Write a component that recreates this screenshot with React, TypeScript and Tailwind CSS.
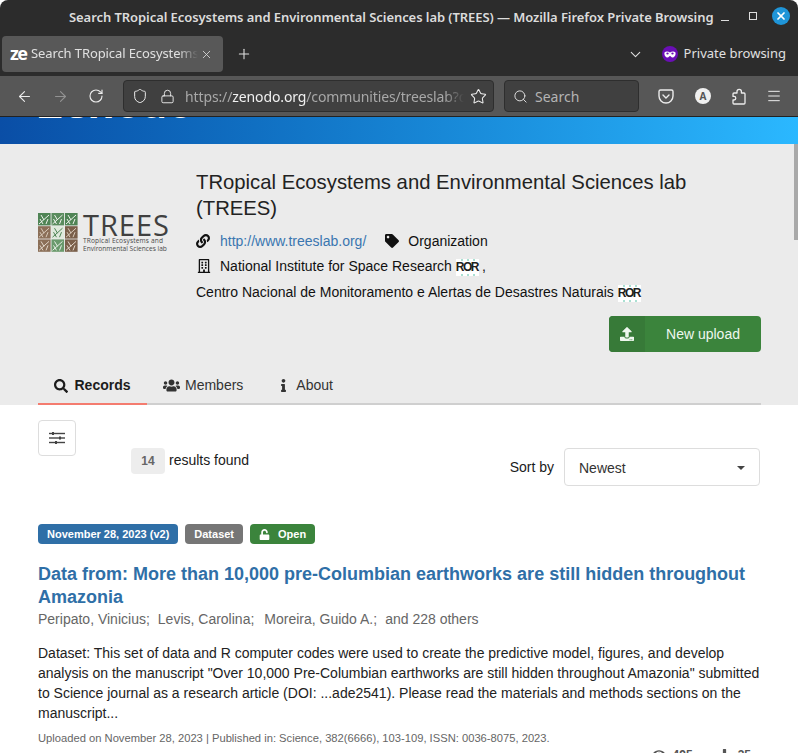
import { ArrowLeft, ArrowRight, ChevronDown, Lock, Menu, Plus, RotateCw, Search, Shield, Star, X } from "lucide-react";
import { FaDownload, FaEye, FaInfo, FaLink, FaRegBuilding, FaSearch, FaTag, FaUnlock, FaUpload, FaUsers } from "react-icons/fa";

const sans = "font-['Liberation_Sans',Arial,sans-serif]";

// 3x3 tiles of the TREES mark: background and vein colour
const tiles = [
  ["#4f8455", "#eef2ec"],
  ["#5a8c5e", "#eef2ec"],
  ["#4f8455", "#eef2ec"],
  ["#8b6f58", "#d9cbbb"],
  ["#dfe9dc", "#4f8455"],
  ["#7a5f4a", "#d9cbbb"],
  ["#8b6f58", "#e2d7ca"],
  ["#6a9a6c", "#e8efe6"],
  ["#7a5f4a", "#e2d7ca"],
];

const TreesLogo = () => (
  <div className="flex items-start gap-[5px] w-[132px] shrink-0">
    <svg width="40" height="39" viewBox="0 0 40 39" className="shrink-0">
      {tiles.map(([bg, vein], i) => {
        const x = (i % 3) * 13.5;
        const y = Math.floor(i / 3) * 13.2;
        return (
          <g key={i} transform={`translate(${x} ${y})`}>
            <rect width="12.6" height="12.4" fill={bg} />
            <path d="M1 11L11 2M3 2L6 7M8 11L10 6M2 6L5 11" stroke={vein} strokeWidth="1" fill="none" />
          </g>
        );
      })}
    </svg>
    <div className="flex flex-col text-[#4a4a4a] font-['Open_Sans',sans-serif]">
      <span className="text-[29px] leading-[23px] tracking-[1px] font-normal text-[#404040]">TREES</span>
      <span className="text-[6.6px] leading-[8px] mt-[1px] whitespace-nowrap tracking-[0.15px]">TRopical Ecosystems and</span>
      <span className="text-[6.6px] leading-[8px] whitespace-nowrap">Environmental Sciences lab</span>
    </div>
  </div>
);

const RorBadge = () => (
  <span className="inline-flex flex-col items-center justify-between w-[23px] h-[17px] bg-white ml-[4px] mr-[3px] relative top-[1px] shrink-0">
    <svg width="17" height="2" viewBox="0 0 17 2" className="block">
      <path d="M2 1h2M8 1h2M14 1h2" stroke="#8fd6c4" strokeWidth="1.5" />
    </svg>
    <span className="text-[12px] leading-[10px] font-bold text-[#202020] tracking-[-1.5px] pr-[1px]">ROR</span>
    <svg width="17" height="2" viewBox="0 0 17 2" className="block">
      <path d="M2 1h2M8 1h2M14 1h2" stroke="#8fd6c4" strokeWidth="1.5" />
    </svg>
  </span>
);

const App = () => {
  return (
    <div className={`relative w-[798px] h-[753px] overflow-hidden bg-white flex flex-col ${sans}`}>
      {/* Window title */}
      <div className="h-[36px] shrink-0 bg-[#2c2c2c] rounded-t-[8px] flex items-center font-['Noto_Sans',sans-serif] text-[#dcdcdc]">
        <div className="pl-[69px] shrink-0 text-[13px] font-semibold whitespace-nowrap tracking-[-0.07px]">
          Search TRopical Ecosystems and Environmental Sciences lab (TREES) — Mozilla Firefox Private Browsing
        </div>
      </div>
      <div className="absolute top-[7px] right-[8px] flex items-center">
        <div className="w-[8px] h-[1px] bg-[#ddd] mt-[9px]" />
        <div className="ml-[20px] w-[8px] h-[8px] border border-[#ddd]" />
        <div className="ml-[15px] w-[18px] h-[18px] rounded-full bg-[#1f95d8] flex items-center justify-center">
          <X size={12} strokeWidth={3.5} color="#fff" />
        </div>
      </div>

      {/* Tab strip */}
      <div className="h-[40px] shrink-0 bg-[#2c2c2c] flex items-start pl-[2px] font-['Noto_Sans',sans-serif] text-[#e0e0e0]">
        <div className="h-[36px] w-[221px] rounded-[4px] bg-[#585858] flex items-center pl-[8px] pr-[10px]">
          <span className="text-[18px] leading-[18px] font-bold text-white tracking-[-1.5px] w-[21px] shrink-0 -mt-[3px]">ze</span>
          <span className="text-[13px] tracking-[-0.1px] w-[167px] overflow-hidden whitespace-nowrap text-[#e0e0e0] [mask-image:linear-gradient(to_right,black_88%,transparent)]">Search TRopical Ecosystems and</span>
          <X size={13} strokeWidth={1.5} className="ml-[2px] shrink-0" />
        </div>
        <div className="ml-[13px] h-[36px] flex items-center">
          <Plus size={16} strokeWidth={1.6} />
        </div>
        <div className="ml-auto h-[36px] flex items-center pr-[12px]">
          <ChevronDown size={17} strokeWidth={1.5} className="mr-[18px]" />
          <span className="w-[16px] h-[16px] rounded-full bg-[#6a0fb5] flex items-center justify-center mr-[6px]">
            <svg width="12" height="7" viewBox="0 0 12 7">
              <path fillRule="evenodd" d="M0.5 1.5C2 0 4.5 0.5 6 1.5C7.5 0.5 10 0 11.5 1.5C12 4 10.5 6.5 8.5 6.5C7 6.5 7 5 6 5C5 5 5 6.5 3.5 6.5C1.5 6.5 0 4 0.5 1.5ZM2.3 2.6a1.2 1 0 1 0 2.4 0a1.2 1 0 1 0-2.4 0ZM7.3 2.6a1.2 1 0 1 0 2.4 0a1.2 1 0 1 0-2.4 0Z" fill="#fff" />
            </svg>
          </span>
          <span className="text-[13px]">Private browsing</span>
        </div>
      </div>

      {/* Toolbar */}
      <div className="h-[41px] shrink-0 bg-[#575757] border-b border-[#222] flex items-center pl-[16px] text-[#ececec] font-['Noto_Sans',sans-serif]">
        <ArrowLeft size={17} strokeWidth={1.5} />
        <ArrowRight size={17} strokeWidth={1.5} className="ml-[19px] text-[#939393]" />
        <RotateCw size={16} strokeWidth={1.7} className="ml-[19px]" />
        <div className="ml-[19px] w-[371px] h-[32px] rounded-[4px] bg-[#404040] border border-[#2e2e2e] flex items-center pl-[8px] pr-[6px]">
          <Shield size={16} strokeWidth={1.5} className="shrink-0" />
          <Lock size={15} strokeWidth={1.5} className="ml-[12px] shrink-0" />
          <div className="ml-[10px] w-[279px] overflow-hidden whitespace-nowrap text-[14px] tracking-[-0.12px] text-[#a8a8a8] [mask-image:linear-gradient(to_right,black_93%,transparent)]">
            https://<span className="text-[#f0f0f0]">zenodo.org</span>/communities/treeslab?q
          </div>
          <Star size={17} strokeWidth={1.5} className="ml-auto shrink-0" />
        </div>
        <div className="ml-[10px] w-[135px] h-[32px] rounded-[4px] bg-[#404040] border border-[#2e2e2e] flex items-center pl-[8px] text-[14px] text-[#b4b4b4]">
          <Search size={15} strokeWidth={1.6} className="text-[#ddd] mr-[7px]" />
          Search
        </div>
        <svg width="16" height="15" viewBox="0 0 16 15" fill="none" stroke="#ececec" strokeWidth="1.4" className="ml-[19px]">
          <path d="M2.5 1h11a1.5 1.5 0 0 1 1.5 1.5V7a7 7 0 0 1-14 0V2.5A1.5 1.5 0 0 1 2.5 1Z" />
          <path d="M5 6l3 3 3-3" strokeLinecap="round" />
        </svg>
        <div className="ml-[21px] w-[16px] h-[16px] rounded-full bg-[#f0f0f0] text-[#555] text-[10px] font-bold flex items-center justify-center">A</div>
        <svg width="15" height="17" viewBox="0 0 15 17" fill="none" stroke="#ececec" strokeWidth="1.3" className="ml-[21px]">
          <path d="M2 16a1 1 0 0 1-1-1v-3h1a1.8 1.8 0 0 0 0-3.6H1V6a1 1 0 0 1 1-1h3V3.5a2.2 2.2 0 0 1 4.4 0V5H12a1 1 0 0 1 1 1v9a1 1 0 0 1-1 1Z" strokeLinejoin="round" />
        </svg>
        <Menu size={16} strokeWidth={1.5} className="ml-[19px]" />
      </div>

      {/* Site header band */}
      <div className="h-[27px] shrink-0 overflow-hidden bg-gradient-to-r from-[#0a4ea6] to-[#2bb8ff] pl-[38px]">
        <div className="text-[42px] leading-[42px] -mt-[36px] text-white font-bold font-['Open_Sans',sans-serif]">Zenodo</div>
      </div>

      {/* Community header */}
      <div className="h-[261px] shrink-0 bg-[#ebebeb] pl-[38px] pr-[37px] flex flex-col">
        <div className="flex h-[224px] text-[14px] text-[#111]">
          <div className="w-[158px] shrink-0 pt-[69px]">
            <TreesLogo />
          </div>
          <div className="flex-1 pt-[25px]">
            <h1 className="text-[20.3px] leading-[26px] text-[#222] font-normal">
              TRopical Ecosystems and Environmental Sciences lab (TREES)
            </h1>
            <div className="flex items-center mt-[10px] h-[20px]">
              <FaLink size={14} className="mr-[10px]" />
              <span className="text-[#3a76b0]">http://www.treeslab.org/</span>
              <FaTag size={14} className="ml-[19px] mr-[9px]" />
              <span>Organization</span>
            </div>
            <div className="flex items-center mt-[5px] h-[20px]">
              <FaRegBuilding size={14} className="ml-[1px] mr-[9px]" />
              <span>National Institute for Space Research</span>
              <RorBadge />
              <span>,</span>
            </div>
            <div className="flex items-center mt-[6px] h-[20px] whitespace-nowrap">
              <span>Centro Nacional de Monitoramento e Alertas de Desastres Naturais</span>
              <RorBadge />
            </div>
            <div className="flex justify-end mt-[14px]">
              <div className="w-[152px] h-[36px] rounded-[4px] bg-[#3b843c] text-[#eef7ee] flex overflow-hidden">
                <div className="w-[36px] bg-[#377a38] flex items-center justify-center">
                  <FaUpload size={14} />
                </div>
                <div className="flex-1 flex items-center justify-center">New upload</div>
              </div>
            </div>
          </div>
        </div>

        {/* Tabs */}
        <div className="flex h-[37px] border-b-2 border-[#cfcfcf] text-[14px] text-[#333]">
          <div className="w-[109px] -mb-[2px] border-b-2 border-[#f47c6f] flex items-center justify-center gap-[6px] font-bold text-[#1c1c1c]">
            <FaSearch size={14} />
            Records
          </div>
          <div className="ml-[16px] flex items-center gap-[5px]">
            <FaUsers size={17} />
            Members
          </div>
          <div className="ml-[34px] flex items-center gap-[6px]">
            <FaInfo size={13} />
            About
          </div>
        </div>
      </div>

      {/* Results */}
      <div className="flex-1 px-[38px] text-[14px] text-[#1a1a1a]">
        <div className="flex items-start h-[119px]">
          <div className="mt-[15px] w-[38px] h-[36px] border border-[#ddd] rounded-[4px] flex items-center justify-center shrink-0">
            <svg width="16" height="12" viewBox="0 0 16 12" fill="#444">
              <rect y="0.8" width="16" height="1.4" />
              <rect y="5.3" width="16" height="1.4" />
              <rect y="9.8" width="16" height="1.4" />
              <rect x="3" y="0" width="2" height="3" />
              <rect x="10" y="4.5" width="2" height="3" />
              <rect x="6" y="9" width="2" height="3" />
            </svg>
          </div>
          <div className="ml-[55px] mt-[43px] flex items-center">
            <span className="w-[34px] h-[26px] rounded-[4px] bg-[#ededed] text-[#666] text-[12px] font-bold flex items-center justify-center mr-[4px]">14</span>
            <span className="-mt-[2px]">results found</span>
          </div>
          <div className="ml-auto mt-[43px] flex items-center">
            <span className="mr-[10px]">Sort by</span>
            <div className="w-[196px] h-[38px] border border-[#ddd] rounded-[4px] flex items-center pl-[14px] pr-[14px] pt-[2px] text-[#333]">
              Newest
              <span className="ml-auto w-0 h-0 border-x-[4px] border-x-transparent border-t-[4px] border-t-[#444]" />
            </div>
          </div>
        </div>

        {/* Labels */}
        <div className="flex gap-[7px] text-[11px] font-bold text-white h-[20px]">
          <span className="px-[9px] rounded-[4px] bg-[#2f6fa7] flex items-center">November 28, 2023 (v2)</span>
          <span className="px-[9px] rounded-[4px] bg-[#767676] flex items-center">Dataset</span>
          <span className="px-[9px] rounded-[4px] bg-[#3b843c] flex items-center gap-[8px]">
            <FaUnlock size={11} />
            Open
          </span>
        </div>

        <h2 className="mt-[19px] text-[18px] leading-[23px] font-bold text-[#2f6fa7]">
          Data from: More than 10,000 pre-Columbian earthworks are still hidden throughout Amazonia
        </h2>
        <div className="flex text-[14px] leading-[20px] text-[#666]">
          <span className="mr-[8px]">Peripato, Vinicius;</span>
          <span className="mr-[10px]">Levis, Carolina;</span>
          <span className="mr-[8px]">Moreira, Guido A.;</span>
          <span>and 228 others</span>
        </div>
        <p className="mt-[14px] text-[14px] leading-[20px] text-[#222]">
          Dataset: This set of data and R computer codes were used to create the predictive model, figures, and develop analysis on the manuscript "Over 10,000 Pre-Columbian earthworks are still hidden throughout Amazonia" submitted to Science journal as a research article (DOI: ...ade2541). Please read the materials and methods sections on the manuscript...
        </p>
        <div className="mt-[8px] text-[11.2px] leading-[14px] text-[#666]">
          Uploaded on November 28, 2023 | Published in: Science, 382(6666), 103-109, ISSN: 0036-8075, 2023.
        </div>
        <div className="flex justify-end items-center mt-[1px] pr-[9px] text-[12px] font-bold text-[#555]">
          <FaEye size={14} className="mr-[7px]" />
          495
          <FaDownload size={13} className="ml-[25px] mr-[7px]" />
          35
        </div>
      </div>

      {/* Scrollbar thumb */}
      <div className="absolute right-0 top-[144px] w-[4px] h-[96px] bg-[#a9a9a9]" />
    </div>
  );
};

export default App;
